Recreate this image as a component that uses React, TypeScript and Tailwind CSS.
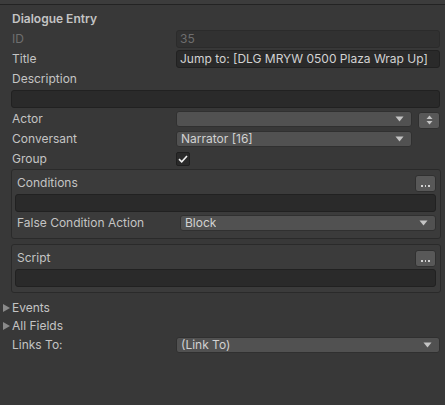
const font = { fontFamily: 'Inter, "Noto Sans", sans-serif' };

function Arrow() {
  return (
    <svg width="9" height="6" viewBox="0 0 9 6" className="shrink-0">
      <path d="M0.5 0.5 L8.5 0.5 L4.5 5.5 Z" fill="#c4c4c4" />
    </svg>
  );
}

function Dropdown({ value, className = '' }: { value: string; className?: string }) {
  return (
    <div
      className={`h-4 flex items-center justify-between pl-[4px] pr-[7px] bg-[#515151] border border-[#303030] rounded-[3px] text-[#d2d2d2] ${className}`}
    >
      <span className="truncate leading-[14px]">{value}</span>
      <Arrow />
    </div>
  );
}

function TextField({ value = '', className = '', dim = false }: { value?: string; className?: string; dim?: boolean }) {
  return (
    <div
      className={`h-[18px] flex items-center px-[3px] rounded-[3px] border ${
        dim ? 'bg-[#313131] border-[#2b2b2b] text-[#6e6e6e]' : 'bg-[#2a2a2a] border-[#212121] text-[#d2d2d2]'
      } ${className}`}
    >
      <span className="truncate leading-[16px]">{value}</span>
    </div>
  );
}

function DotsButton() {
  return (
    <div className="w-[21px] h-[17px] bg-[#585858] border border-[#303030] rounded-[3px] flex items-end justify-center pb-[4px] gap-[2px]">
      <span className="w-[1.5px] h-[1.5px] bg-[#d2d2d2]" />
      <span className="w-[1.5px] h-[1.5px] bg-[#d2d2d2]" />
      <span className="w-[1.5px] h-[1.5px] bg-[#d2d2d2]" />
    </div>
  );
}

function Row({ label, children, dim = false }: { label: string; children?: React.ReactNode; dim?: boolean }) {
  return (
    <div className="h-5 flex items-center pl-[12px] pr-[5px]">
      <div className={`w-[164px] shrink-0 ${dim ? 'text-[#6f6f6f]' : 'text-[#c4c4c4]'}`}>{label}</div>
      <div className="flex-1 min-w-0">{children}</div>
    </div>
  );
}

function Foldout({ label }: { label: string }) {
  return (
    <div className="h-[18px] flex items-center pl-[3px] text-[#c4c4c4]">
      <svg width="7" height="8" viewBox="0 0 7 8" className="mr-[2px]">
        <path d="M0 0 L7 4 L0 8 Z" fill="#8a8a8a" />
      </svg>
      <span>{label}</span>
    </div>
  );
}

export default function App() {
  return (
    <div className="w-[445px] h-[405px] bg-[#383838] text-[12px] overflow-hidden" style={font}>
      <div className="h-[5px] bg-[#3c3c3c] border-b border-[#232323]" />

      <div className="h-5 mt-[4px] flex items-center pl-[12px] font-semibold text-[#c4c4c4]">Dialogue Entry</div>

      <Row label="ID" dim>
        <TextField value="35" dim />
      </Row>
      <Row label="Title">
        <TextField value="Jump to: [DLG MRYW 0500 Plaza Wrap Up]" />
      </Row>
      <Row label="Description" />
      <div className="h-5 flex items-center pl-[11px] pr-[5px]">
        <TextField className="w-full" />
      </div>

      <Row label="Actor">
        <div className="flex items-center gap-[6px]">
          <Dropdown value="" className="flex-1" />
          <div className="w-[22px] h-[17px] mt-[2px] bg-[#585858] border border-[#303030] rounded-[3px] flex items-center justify-center">
            <svg width="7" height="10" viewBox="0 0 7 10">
              <path d="M3.5 0.5 L6.5 4 L0.5 4 Z" fill="#c4c4c4" />
              <path d="M0.5 6 L6.5 6 L3.5 9.5 Z" fill="#c4c4c4" />
            </svg>
          </div>
        </div>
      </Row>
      <Row label="Conversant">
        <Dropdown value="Narrator [16]" className="mr-[28px]" />
      </Row>
      <Row label="Group">
        <div className="w-[14px] h-[14px] bg-[#2a2a2a] border border-[#1f1f1f] rounded-[2px] flex items-center justify-center">
          <svg width="10" height="8" viewBox="0 0 10 8">
            <path d="M1 4.2 L3.7 6.8 L9 1" stroke="#f0f0f0" strokeWidth="1.6" fill="none" />
          </svg>
        </div>
      </Row>

      <div className="ml-[11px] mr-[4px] bg-[#3b3b3b] border border-[#2a2a2a] rounded-[3px] pl-[3px] pr-[4px] pt-[4px] pb-[5px]">
        <div className="h-[18px] flex items-center justify-between">
          <span className="pl-[2px] text-[#c4c4c4]">Conditions</span>
          <DotsButton />
        </div>
        <TextField className="mt-[2px]" />
        <div className="h-5 mt-[1px] flex items-center">
          <div className="w-[165px] pl-[2px] shrink-0 text-[#c4c4c4]">False Condition Action</div>
          <Dropdown value="Block" className="flex-1" />
        </div>
      </div>

      <div className="ml-[11px] mr-[4px] mt-[5px] bg-[#3b3b3b] border border-[#2a2a2a] rounded-[3px] pl-[3px] pr-[4px] pt-[4px] pb-[5px]">
        <div className="h-[18px] flex items-center justify-between">
          <span className="pl-[2px] text-[#c4c4c4]">Script</span>
          <DotsButton />
        </div>
        <TextField className="mt-[2px]" />
      </div>

      <div className="mt-[6px]">
        <Foldout label="Events" />
        <Foldout label="All Fields" />
      </div>
      <Row label="Links To:">
        <Dropdown value="(Link To)" />
      </Row>
    </div>
  );
}
